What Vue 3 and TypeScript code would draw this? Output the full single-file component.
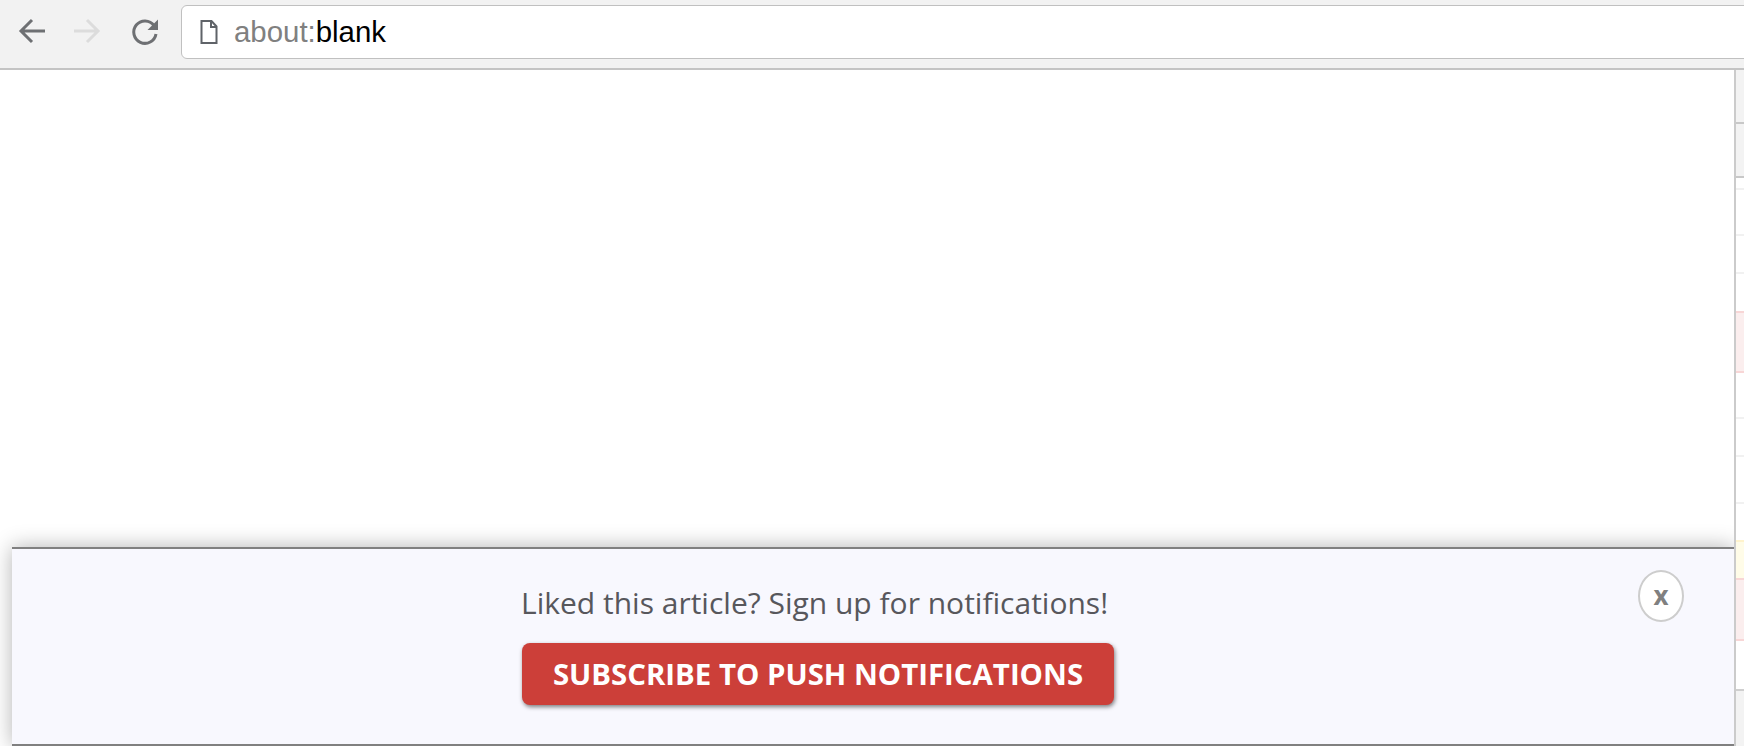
<script setup lang="ts">
interface Row { h: number; kind: string }
const rows: Row[] = [
  { h: 54, kind: 'head' },
  { h: 54, kind: 'head' },
  { h: 12, kind: 'line' },
  { h: 46, kind: 'line' },
  { h: 38, kind: 'line' },
  { h: 37, kind: 'plain' },
  { h: 62, kind: 'error' },
  { h: 46, kind: 'line' },
  { h: 38, kind: 'line' },
  { h: 47, kind: 'line' },
  { h: 36, kind: 'plain' },
  { h: 38, kind: 'warn' },
  { h: 63, kind: 'error' },
  { h: 48, kind: 'plain' },
  { h: 57, kind: 'foot' },
]
</script>

<template>
  <div class="page">
    <header class="toolbar">
      <svg class="nav" width="30" height="30" viewBox="0 0 30 30" fill="none" stroke="#6e7073" stroke-width="3">
        <path d="M28 15H5M15 4 4 15l11 11" />
      </svg>
      <svg class="nav fwd" width="30" height="30" viewBox="0 0 30 30" fill="none" stroke="#dcdcdc" stroke-width="3">
        <path d="M2 15h23M15 4l11 11-11 11" />
      </svg>
      <svg class="nav reload" width="30" height="30" viewBox="0 0 30 30" fill="none">
        <path d="M24 8.5A11.2 11.2 0 1 0 26 17" stroke="#6e7073" stroke-width="3" />
        <path d="M28 2.5V13H17.5Z" fill="#6e7073" />
      </svg>
      <div class="address">
        <svg class="doc" width="18" height="24" viewBox="0 0 18 24" fill="none" stroke="#5f6368" stroke-width="2">
          <path d="M1.5 1h10l5 5.500V23h-15ZM11 1v6h5.500" />
        </svg>
        <span class="url"><span class="scheme">about:</span>blank</span>
      </div>
    </header>
    <main class="body">
      <div class="viewport"></div>
      <aside class="side">
        <div v-for="(r, i) in rows" :key="i" class="row" :class="r.kind" :style="{ height: r.h + 'px' }"></div>
      </aside>
    </main>
    <section class="panel">
      <p class="msg">Liked this article? Sign up for notifications!</p>
      <button class="subscribe">SUBSCRIBE TO PUSH NOTIFICATIONS</button>
      <button class="close">x</button>
    </section>
  </div>
</template>

<style scoped>
.page {
  position: relative;
  width: 1744px;
  height: 746px;
  overflow: hidden;
  background: #fff;
  display: flex;
  flex-direction: column;
  font-family: "Open Sans", sans-serif;
}
.toolbar {
  height: 70px;
  flex: none;
  box-sizing: border-box;
  background: #f2f2f2;
  border-bottom: 2px solid #c4c4c4;
  display: flex;
  align-items: flex-start;
  padding: 5px 0 0 17px;
}
.nav { flex: none; margin-top: 11px; }
.fwd { margin-left: 25px; }
.reload { margin-left: 28px; margin-top: 12px; }
.address {
  flex: 1;
  margin-left: 21px;
  margin-right: -10px;
  height: 54px;
  box-sizing: border-box;
  background: #fff;
  border: 1.5px solid #c0c0c0;
  border-radius: 6px;
  display: flex;
  align-items: center;
  padding-left: 18px;
}
.doc { flex: none; }
.url {
  margin-left: 16px;
  font-family: "Liberation Sans", Arial, sans-serif;
  font-size: 29.400px;
  color: #000;
}
.scheme { color: #80807f; }
.body { flex: 1; display: flex; min-height: 0; }
.viewport { flex: 1; }
.side {
  width: 8px;
  flex: none;
  border-left: 2px solid #cbcbcb;
  display: flex;
  flex-direction: column;
}
.row { box-sizing: border-box; flex: none; background: #fff; }
.head { background: #f3f3f3; border-bottom: 2px solid #c8c8c8; }
.line { border-bottom: 2px solid #f1f1f1; }
.error { background: #fbeeee; border-top: 2px solid #f8d6d6; border-bottom: 2px solid #f8d6d6; }
.warn { background: #fffce8; border-top: 2px solid #fff3cc; }
.foot { background: #f3f3f3; border-top: 2px solid #cfcfcf; }
.panel {
  position: absolute;
  left: 12px;
  width: 1722px;
  top: 547px;
  height: 199px;
  box-sizing: border-box;
  background: #f8f8fe;
  border-top: 2px solid #808080;
  border-bottom: 2px solid #808080;
  box-shadow: 0 0 20px rgba(0, 0, 0, 0.3);
  padding: 34px 0 0 510px;
  clip-path: inset(-30px 0 -2px -30px);
}
.msg {
  margin: 0 0 0 -1px;
  font-size: 30px;
  line-height: 40px;
  color: #57575c;
  white-space: nowrap;
}
.subscribe {
  display: block;
  margin-top: 20px;
  width: 592px;
  height: 62px;
  padding: 0;
  border: none;
  border-radius: 8px;
  background: #cc3f39;
  color: #fff;
  font-family: "Open Sans", sans-serif;
  font-weight: 700;
  font-size: 29.400px;
  box-shadow: 1px 2px 4px rgba(0, 0, 0, 0.5);
}
.close {
  position: absolute;
  left: 1626px;
  top: 21px;
  width: 46px;
  height: 52px;
  padding: 0 0 3px;
  box-sizing: border-box;
  background: #fff;
  border: 2px solid #cdcdcd;
  border-radius: 50%;
  color: #808080;
  font-family: "Open Sans", sans-serif;
  font-weight: 700;
  font-size: 26px;
  line-height: 1;
}
</style>
